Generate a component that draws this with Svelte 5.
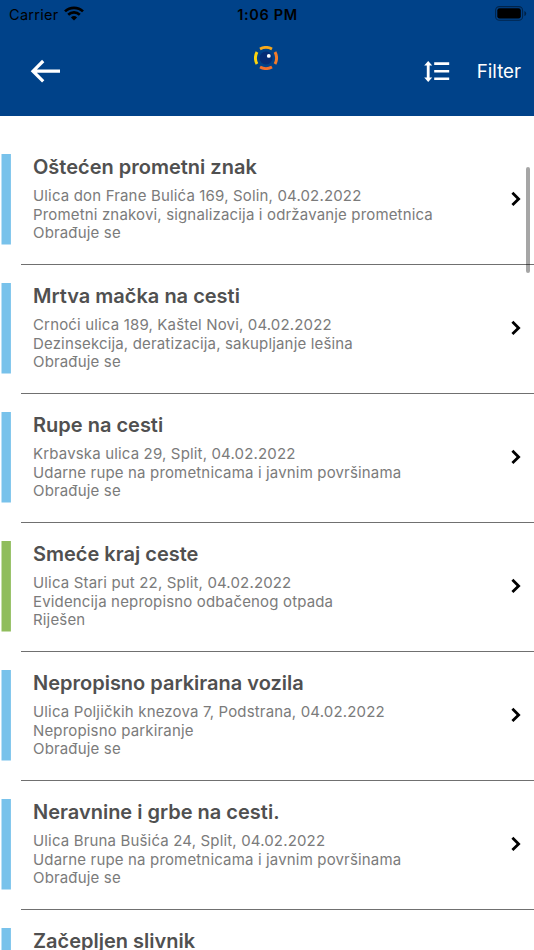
<script lang="ts">
	interface Report {
		title: string;
		place?: string;
		category?: string;
		status?: string;
	}

	const reports: Report[] = [
		{
			title: 'Oštećen prometni znak',
			place: 'Ulica don Frane Bulića 169, Solin, 04.02.2022',
			category: 'Prometni znakovi, signalizacija i održavanje prometnica',
			status: 'Obrađuje se'
		},
		{
			title: 'Mrtva mačka na cesti',
			place: 'Crnoći ulica 189, Kaštel Novi, 04.02.2022',
			category: 'Dezinsekcija, deratizacija, sakupljanje lešina',
			status: 'Obrađuje se'
		},
		{
			title: 'Rupe na cesti',
			place: 'Krbavska ulica 29, Split, 04.02.2022',
			category: 'Udarne rupe na prometnicama i javnim površinama',
			status: 'Obrađuje se'
		},
		{
			title: 'Smeće kraj ceste',
			place: 'Ulica Stari put 22, Split, 04.02.2022',
			category: 'Evidencija nepropisno odbačenog otpada',
			status: 'Riješen'
		},
		{
			title: 'Nepropisno parkirana vozila',
			place: 'Ulica Poljičkih knezova 7, Podstrana, 04.02.2022',
			category: 'Nepropisno parkiranje',
			status: 'Obrađuje se'
		},
		{
			title: 'Neravnine i grbe na cesti.',
			place: 'Ulica Bruna Bušića 24, Split, 04.02.2022',
			category: 'Udarne rupe na prometnicama i javnim površinama',
			status: 'Obrađuje se'
		},
		{ title: 'Začepljen slivnik' }
	];
</script>

<div class="screen">
	<header>
		<div class="status-bar">
			<div class="carrier">
				<span>Carrier</span>
				<svg width="20" height="15" viewBox="0 0 20 15" fill="none" stroke="#000" stroke-width="2.7">
					<path d="M1 5.4C6 .6 14 .6 19 5.4" />
					<path d="M4.2 8.7C7.5 5.6 12.5 5.6 15.8 8.7" />
					<path d="M10 14.5L6.9 11.4Q10 8.8 13.1 11.4Z" fill="#000" stroke="none" />
				</svg>
			</div>
			<span class="time">1:06 PM</span>
			<svg class="battery" width="32" height="15" viewBox="0 0 32 15">
				<rect x=".6" y=".6" width="27" height="13.6" rx="3.8" fill="none" stroke="#000" stroke-opacity=".45" stroke-width="1.1" />
				<rect x="2.3" y="2.2" width="23.5" height="10.3" rx="2.3" />
				<path d="M29.4 5q1.8.5 1.8 2.5t-1.8 2.5z" fill-opacity=".5" />
			</svg>
		</div>
		<nav>
			<button aria-label="Natrag">
				<svg width="31" height="24" viewBox="0 0 31 24" fill="none" stroke="#fff" stroke-width="3.2">
					<path d="M30 12.2H3.4M13.2 2L3 12.2l10.2 10.2" />
				</svg>
			</button>
			<svg class="logo" width="24" height="24" viewBox="0 0 24 24" fill="none" stroke-width="2.9">
				<path d="M6 3Q12 -.2 18 3" stroke="#f8a91b" />
				<path d="M21 6Q24.2 12 21 18" stroke="#f47b2a" />
				<path d="M18 21Q12 24.2 6 21" stroke="#f36f2c" />
				<path d="M3 18Q-.2 12 3 6" stroke="#fcd50e" />
				<circle cx="12" cy="12" r="6.5" fill="#052c75" />
				<circle cx="14.8" cy="9.9" r="1.9" fill="#fff" />
			</svg>
			<div class="actions">
				<button aria-label="Poredaj">
					<svg width="26" height="21" viewBox="0 0 26 21" fill="#fff">
						<path d="M4.2 0l4 4.6H5.6v11.8h2.6L4.2 21l-4-4.6h2.6V4.6H.2z" />
						<path d="M10.2 1.3h15v2.6h-15zM10.2 8.9h15v2.6h-15zM10.2 16.5h15v2.6h-15z" />
					</svg>
				</button>
				<button class="filter">Filter</button>
			</div>
		</nav>
	</header>

	<ul>
		{#each reports as report}
			<li>
				<svg class="marker" class:solved={report.status === 'Riješen'} width="12" height="91" viewBox="0 0 12 91">
					<rect x="1.5" width="9.4" height="90.5" />
				</svg>
				<div class="body">
					<div class="text">
						<h2>{report.title}</h2>
						{#if report.place}
							<p>{report.place}</p>
							<p>{report.category}</p>
							<p>{report.status}</p>
						{/if}
					</div>
					<svg width="10" height="15" viewBox="0 0 10 15" fill="none" stroke="#000" stroke-width="2.8">
						<path d="M1.4 1.8l6.2 6.1-6.2 6.1" />
					</svg>
				</div>
			</li>
		{/each}
	</ul>
	<div class="scrollbar"></div>
</div>

<style>
	.screen {
		position: relative;
		height: 950px;
		overflow: hidden;
		background: #fff;
		font-family: Inter, 'Liberation Sans', sans-serif;
	}

	header {
		height: 116px;
		background: #004289;
	}

	.status-bar {
		display: grid;
		grid-template-columns: 1fr auto 1fr;
		height: 28px;
		align-items: center;
		padding: 0 7px 0 9px;
		font-size: 14.5px;
		color: #000;
	}

	.carrier {
		display: flex;
		align-items: center;
		gap: 5px;
		letter-spacing: 0.3px;
	}

	.carrier svg {
		margin-top: -2px;
	}

	.time {
		margin-right: 1px;
		font-weight: 600;
		letter-spacing: 0.65px;
	}

	.battery {
		justify-self: end;
		margin-top: -2px;
	}

	nav {
		display: grid;
		grid-template-columns: 1fr auto 1fr;
		align-items: center;
		height: 86px;
		padding: 0 13px 0 30px;
	}

	.logo {
		margin: -26px 19px 0 0;
	}

	button {
		display: block;
		padding: 0;
		border: 0;
		background: none;
		color: #fff;
		font-family: inherit;
	}

	button svg {
		display: block;
	}

	.actions {
		display: flex;
		align-items: center;
		justify-content: flex-end;
		gap: 27px;
	}

	.filter {
		font-size: 18.7px;
	}

	ul {
		margin: 0;
		padding: 20px 0 0;
		list-style: none;
	}

	li {
		display: flex;
		height: 129px;
	}

	.marker {
		margin: 18px 9px 0 0;
		fill: #78c2eb;
	}

	.marker.solved {
		fill: #90bd5c;
	}

	.body {
		display: flex;
		flex: 1;
		box-sizing: border-box;
		align-items: center;
		justify-content: space-between;
		padding: 0 13px 4px 12px;
		border-bottom: 1px solid #707070;
	}

	.text {
		align-self: flex-start;
		padding-top: 18px;
		white-space: nowrap;
	}

	h2 {
		margin: 0 0 7px;
		font-size: 20px;
		font-weight: 600;
		line-height: 26px;
		color: #505050;
	}

	p {
		margin: 0;
		font-size: 15px;
		line-height: 18.5px;
		letter-spacing: 0.16px;
		color: #7b7b7b;
	}

	.scrollbar {
		position: absolute;
		top: 167px;
		right: 4px;
		width: 4px;
		height: 106px;
		border-radius: 2px;
		background: rgba(0, 0, 0, 0.35);
	}
</style>
